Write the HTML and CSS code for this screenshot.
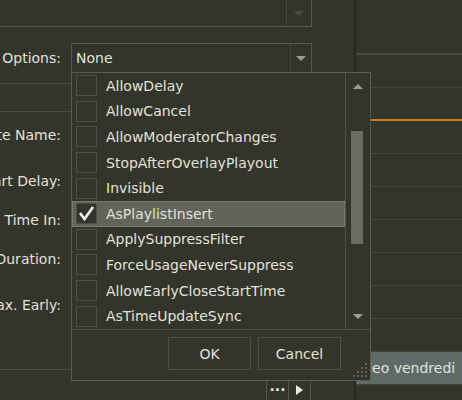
FILE: index.html
```html
<!DOCTYPE html>
<html lang="en">
<head>
  <meta charset="UTF-8" />
  <title>Event Editor</title>
  <link rel="stylesheet" href="styles.css">
</head>
<body>
  <div class="app">
    <div class="editor">
      <div class="combo combo-top">
        <div class="combo-text"></div>
        <div class="combo-btn"><span class="arrow-down dim"></span></div>
      </div>

      <div class="field field-options">
        <div class="label">Options:</div>
        <div class="combo combo-options">
          <div class="combo-text">None</div>
          <div class="combo-btn"><span class="arrow-down"></span></div>
        </div>
      </div>

      <div class="rule rule-a"></div>
      <div class="rule rule-b"></div>

      <div class="field field-tall"><div class="label">Template Name:</div></div>
      <div class="field field-tall"><div class="label">Start Delay:</div></div>
      <div class="field field-short"><div class="label">Mark Time In:</div></div>
      <div class="field field-tall"><div class="label">Duration:</div></div>
      <div class="field field-tall"><div class="label">Max. Early:</div></div>

      <div class="footer">
        <button class="tool-btn">&middot;&middot;&middot;</button>
        <button class="tool-btn"><span class="arrow-right"></span></button>
      </div>
    </div>

    <div class="schedule">
      <div class="schedule-head"></div>
      <div class="slot"></div>
      <div class="slot slot-now"></div>
      <div class="slot"></div>
      <div class="slot"></div>
      <div class="slot"></div>
      <div class="slot"></div>
      <div class="slot"></div>
      <div class="slot"></div>
      <div class="slot"></div>
      <div class="slot slot-selected"><span class="slot-title">Video vendredi</span></div>
    </div>
  </div>

  <!-- options dropdown, open over the form -->
  <div class="popup">
    <div class="popup-body">
      <ul class="option-list">
        <li class="option"><span class="check"></span>AllowDelay</li>
        <li class="option"><span class="check"></span>AllowCancel</li>
        <li class="option"><span class="check"></span>AllowModeratorChanges</li>
        <li class="option"><span class="check"></span>StopAfterOverlayPlayout</li>
        <li class="option"><span class="check"></span>Invisible</li>
        <li class="option option-current">
          <span class="check">
            <svg width="19" height="19" viewBox="0 0 19 19"><polyline points="3,9 7.5,15 16,3" fill="none" stroke="#f2f2ec" stroke-width="2.6"/></svg>
          </span>AsPlaylistInsert
        </li>
        <li class="option"><span class="check"></span>ApplySuppressFilter</li>
        <li class="option"><span class="check"></span>ForceUsageNeverSuppress</li>
        <li class="option"><span class="check"></span>AllowEarlyCloseStartTime</li>
        <li class="option"><span class="check"></span>AsTimeUpdateSync</li>
      </ul>
      <div class="scrollbar">
        <div class="scroll-arrow"><span class="arrow-up"></span></div>
        <div class="scroll-track"><div class="scroll-thumb"></div></div>
        <div class="scroll-arrow"><span class="arrow-down"></span></div>
      </div>
    </div>
    <div class="popup-actions">
      <button class="button">OK</button>
      <button class="button">Cancel</button>
    </div>
    <svg class="grip" width="16" height="16" viewBox="0 0 16 16">
      <g fill="#5f6158">
        <rect x="13" y="1" width="2" height="2"/>
        <rect x="9" y="5" width="2" height="2"/><rect x="13" y="5" width="2" height="2"/>
        <rect x="5" y="9" width="2" height="2"/><rect x="9" y="9" width="2" height="2"/><rect x="13" y="9" width="2" height="2"/>
        <rect x="1" y="13" width="2" height="2"/><rect x="5" y="13" width="2" height="2"/><rect x="9" y="13" width="2" height="2"/><rect x="13" y="13" width="2" height="2"/>
      </g>
    </svg>
  </div>
</body>
</html>
```

FILE: styles.css
```css
body {
  margin: 0;
  background-color: #33342b;
  color: #e2e2da;
  font-family: "DejaVu Sans", sans-serif;
  font-size: 14px;
  overflow: hidden;
}

.app {
  display: flex;
  height: 400px;
}

/* left side: the event form */
.editor {
  width: 354px;
  border-right: 2px solid #26271f;
  display: flex;
  flex-direction: column;
}

.combo {
  display: flex;
  border: 1px solid #55574d;
  box-sizing: border-box;
}

.combo-text {
  flex: 1;
  padding-left: 4px;
  display: flex;
  align-items: center;
}

.combo-btn {
  width: 20px;
  border-left: 1px solid #45473e;
  display: flex;
  align-items: center;
  justify-content: center;
}

.combo-top {
  width: 312px;
  height: 27px;
  border-top: none;
  border-left: none;
}

.combo-top .combo-btn {
  width: 24px;
}

.arrow-down,
.arrow-up {
  width: 0;
  height: 0;
  border-left: 5px solid transparent;
  border-right: 5px solid transparent;
}

.arrow-down {
  border-top: 5px solid #9c9d95;
}

.arrow-up {
  border-bottom: 5px solid #9c9d95;
}

.arrow-down.dim {
  border-top-color: #4a4c43;
}

.arrow-right {
  display: inline-block;
  width: 0;
  height: 0;
  border-top: 5px solid transparent;
  border-bottom: 5px solid transparent;
  border-left: 7px solid #e8e8e2;
}

.field {
  display: flex;
  align-items: center;
}

/* labels are right-aligned and run off the left edge */
.label {
  width: 61px;
  flex-shrink: 0;
  display: flex;
  justify-content: flex-end;
  white-space: nowrap;
}

.field-options {
  margin-top: 16px;
  gap: 10px;
}

.combo-options {
  width: 241px;
  height: 30px;
}

.rule {
  border-top: 1px solid #4b4d44;
}

.rule-a {
  margin-top: 10px;
}

.rule-b {
  margin-top: 27px;
}

.field-tall {
  height: 46px;
}

.field-short {
  height: 32px;
}

.footer {
  margin-top: 41px;
  border-top: 1px solid #4b4d44;
  flex: 1;
  display: flex;
  justify-content: flex-end;
  align-items: flex-end;
  padding-right: 43px;
}

.tool-btn {
  width: 23px;
  height: 21px;
  margin-left: -1px;
  padding: 0;
  background: none;
  border: 1px solid #55574d;
  border-bottom: none;
  color: #e8e8e2;
  font-family: "DejaVu Sans", sans-serif;
  font-size: 14px;
  font-weight: bold;
  display: flex;
  align-items: center;
  justify-content: center;
}

/* right side: the playlist grid */
.schedule {
  flex: 1;
  display: flex;
  flex-direction: column;
}

.schedule-head {
  height: 53px;
  border-bottom: 2px solid #4b4d44;
}

.slot {
  height: 32px;
  border-bottom: 1px solid #45473e;
  overflow: hidden;
  display: flex;
  align-items: center;
}

.slot-now {
  height: 31px;
  border-bottom: 2px solid #d0801e;
}

.slot-selected {
  background-color: #5e6a67;
}

.slot-title {
  white-space: nowrap;
  text-indent: -6px;
}

/* dropdown popup */
.popup {
  position: absolute;
  left: 71px;
  top: 72px;
  width: 300px;
  height: 309px;
  box-sizing: border-box;
  border: 1px solid #595b51;
  background-color: #33342b;
  display: flex;
  flex-direction: column;
}

.popup-body {
  height: 256px;
  display: flex;
}

.option-list {
  flex: 1;
  list-style: none;
  margin: 0;
  padding: 0;
}

.option {
  height: 25.6px;
  box-sizing: border-box;
  display: flex;
  align-items: center;
  padding-left: 4px;
  white-space: nowrap;
}

.option-current {
  background-color: #62635b;
  border: 1px dotted #8e8f86;
  padding-left: 3px;
}

.check {
  width: 21px;
  height: 21px;
  box-sizing: border-box;
  border: 1px solid #4f5148;
  margin-right: 9px;
  background-color: #33342b;
  display: flex;
  align-items: center;
  justify-content: center;
}

.scrollbar {
  width: 24px;
  border-left: 1px solid #4f5148;
  display: flex;
  flex-direction: column;
}

.scroll-arrow {
  height: 26px;
  display: flex;
  align-items: center;
  justify-content: center;
}

.scroll-track {
  flex: 1;
}

.scroll-thumb {
  width: 12px;
  height: 113px;
  margin: 32px 0 0 5px;
  background-color: #6b6c64;
}

.popup-actions {
  flex: 1;
  border-top: 1px solid #4f5148;
  display: flex;
  justify-content: flex-end;
  gap: 7px;
  padding: 7px 29px 0 0;
}

.button {
  width: 83px;
  height: 33px;
  background: none;
  border: 1px solid #4f5148;
  color: #e2e2da;
  font-family: "DejaVu Sans", sans-serif;
  font-size: 14px;
}

.grip {
  position: absolute;
  right: 2px;
  bottom: 2px;
}
```
